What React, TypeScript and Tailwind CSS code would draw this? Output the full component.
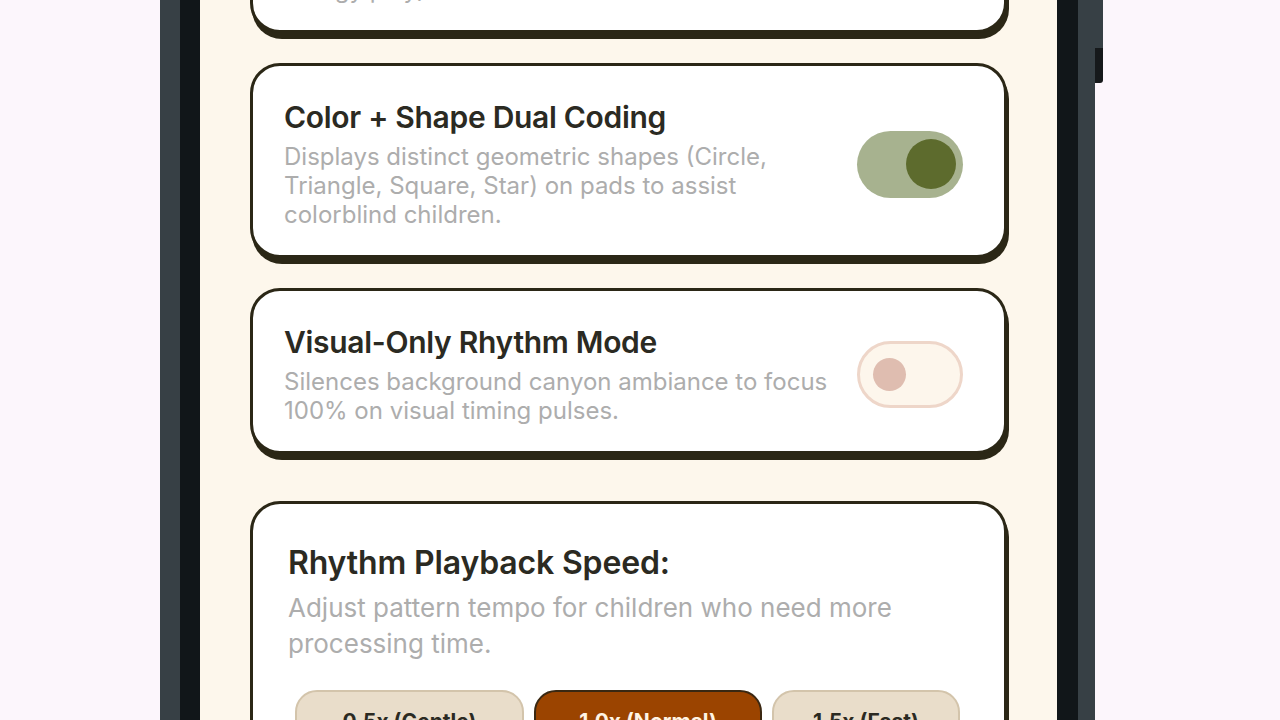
import React from "react";

const font = { fontFamily: "Inter, 'Open Sans', sans-serif" };

function Toggle({ on }: { on: boolean }) {
  if (on) {
    return (
      <div className="flex h-[67px] w-[106px] shrink-0 items-center justify-end rounded-full bg-[#a7b28f] pr-[7px]">
        <div className="h-[50px] w-[50px] rounded-full bg-[#5d6b2d]" />
      </div>
    );
  }
  return (
    <div className="flex h-[67px] w-[106px] shrink-0 items-center justify-start rounded-full border-[3px] border-[#eed6c9] bg-[#fdf6ec] pl-[13px]">
      <div className="h-[33px] w-[33px] rounded-full bg-[#dfbdb0]" />
    </div>
  );
}

function ToggleCard({
  title,
  desc,
  on,
}: {
  title: string;
  desc: React.ReactNode;
  on: boolean;
}) {
  return (
    <div className="flex items-center gap-[16px] rounded-[30px] border-[3px] border-[#2b2716] bg-white pb-[26px] pl-[31px] pr-[41px] pt-[33px] shadow-[2px_6px_0_#2b2716]">
      <div className="min-w-0 flex-1">
        <div className="text-[30px] font-semibold leading-[36px] tracking-[-0.01em] text-[#2b2a22]">
          {title}
        </div>
        <div className="mt-[7px] max-w-[554px] text-[24px] leading-[29px] text-[#adadad]">
          {desc}
        </div>
      </div>
      <Toggle on={on} />
    </div>
  );
}

export default function App() {
  return (
    <div
      className="relative h-[720px] w-[1280px] overflow-hidden bg-[#fcf6fc]"
      style={font}
    >
      <div className="relative ml-[160px] h-[720px] w-[935px] bg-[#374045] pl-[20px] pr-[17px]">
        <div className="absolute left-full top-0 h-[48px] w-[8px] bg-[#374045]" />
        <div className="absolute left-full top-[48px] h-[35px] w-[8px] rounded-br-[3px] bg-[#16191b]" />
        <div className="h-full bg-[#111619] pl-[20px] pr-[21px]">
          <div className="h-full overflow-hidden bg-[#fdf7ec] px-[50px]">
            <div className="mt-[-133px] flex flex-col gap-[30px]">
              <ToggleCard
                title="Reduced Flash Effects"
                desc={
                  <>
                    Dims sudden flashes and shakes (high-
                    <br />
                    energy play).
                  </>
                }
                on={true}
              />
              <ToggleCard
                title="Color + Shape Dual Coding"
                desc="Displays distinct geometric shapes (Circle, Triangle, Square, Star) on pads to assist colorblind children."
                on={true}
              />
              <ToggleCard
                title="Visual-Only Rhythm Mode"
                desc="Silences background canyon ambiance to focus 100% on visual timing pulses."
                on={false}
              />
              <div className="mt-[17px] rounded-[30px] border-[3px] border-[#2b2716] bg-white pb-[30px] pl-[35px] pr-[35px] pt-[39px] shadow-[2px_6px_0_#2b2716]">
                <div className="text-[32px] font-semibold leading-[40px] tracking-[-0.005em] text-[#2b2a22]">
                  Rhythm Playback Speed:
                </div>
                <div className="mt-[7px] max-w-[660px] text-[26px] leading-[36px] text-[#adadad]">
                  Adjust pattern tempo for children who need more processing
                  time.
                </div>
                <div className="ml-[7px] mt-[28px] flex gap-[10px]">
                  <div className="flex h-[64px] w-[229px] items-center justify-center rounded-[22px] border-[2px] border-[#d3c4ab] bg-[#e9ddca] text-[21px] font-bold text-[#2b2a22]">
                    0.5x (Gentle)
                  </div>
                  <div className="flex h-[64px] w-[228px] items-center justify-center rounded-[22px] border-[2px] border-[#3a2812] bg-[#9b4400] text-[21px] font-bold text-[#fff4e4]">
                    1.0x (Normal)
                  </div>
                  <div className="flex h-[64px] w-[188px] items-center justify-center rounded-[22px] border-[2px] border-[#d3c4ab] bg-[#e9ddca] text-[21px] font-bold text-[#2b2a22]">
                    1.5x (Fast)
                  </div>
                </div>
              </div>
            </div>
          </div>
        </div>
      </div>
    </div>
  );
}
